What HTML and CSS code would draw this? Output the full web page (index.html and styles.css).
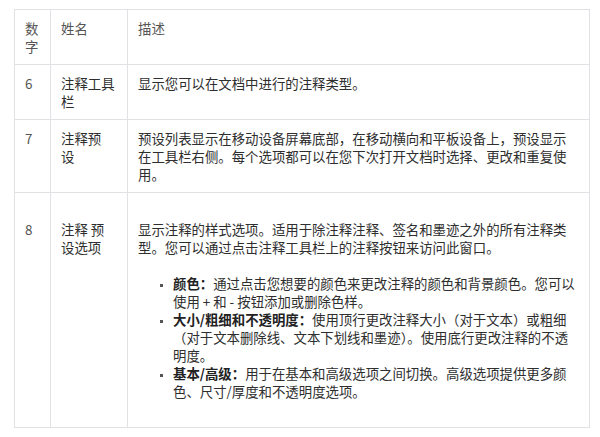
FILE: index.html
```html
<!DOCTYPE html>
<html lang="zh-CN">
<head>
<meta charset="utf-8">
<link rel="stylesheet" href="styles.css">
</head>
<body>
<table class="tbl">
  <colgroup>
    <col class="c-num">
    <col class="c-name">
    <col class="c-desc">
  </colgroup>
  <thead>
    <tr>
      <th>数字</th>
      <th>姓名</th>
      <th>描述</th>
    </tr>
  </thead>
  <tbody>
    <tr>
      <td>6</td>
      <td>注释工具栏</td>
      <td>显示您可以在文档中进行的注释类型。</td>
    </tr>
    <tr>
      <td>7</td>
      <td>注释预<br>设</td>
      <td>预设列表显示在移动设备屏幕底部，在移动横向和平板设备上，预设显示在工具栏右侧。每个选项都可以在您下次打开文档时选择、更改和重复使用。</td>
    </tr>
    <tr class="row-rich">
      <td>8</td>
      <td>注释 预设选项</td>
      <td>
        <p class="para">显示注释的样式选项。适用于除注释注释、签名和墨迹之外的所有注释类型。您可以通过点击注释工具栏上的注释按钮来访问此窗口。</p>
        <ul class="opts">
          <li><b>颜色：</b>通过点击您想要的颜色来更改注释的颜色和背景颜色。您可以使用 + 和 - 按钮添加或删除色样。</li>
          <li><b>大小/粗细和不透明度：</b>使用顶行更改注释大小（对于文本）或粗细（对于文本删除线、文本下划线和墨迹）。使用底行更改注释的不透明度。</li>
          <li><b>基本/高级：</b>用于在基本和高级选项之间切换。高级选项提供更多颜色、尺寸/厚度和不透明度选项。</li>
        </ul>
      </td>
    </tr>
  </tbody>
</table>
</body>
</html>
```
FILE: styles.css
```css
html, body {
  margin: 0;
  padding: 0;
  background: #ffffff;
}
body {
  font-family: "Noto Sans CJK SC", "Noto Sans", sans-serif;
  font-size: 13.4px;
  line-height: 18px;
  color: #2e2e2e;
}
.tbl {
  margin: 9px 0 0 14px;
  border-collapse: collapse;
  table-layout: fixed;
  width: 575px;
}
.c-num { width: 36px; }
.c-name { width: 77px; }
.c-desc { width: 462px; }
.tbl th,
.tbl td {
  border: 1px solid #e2e2e6;
  padding: 9px 10px;
  text-align: left;
  vertical-align: baseline;
}
.tbl th {
  font-weight: normal;
  color: #555555;
}
.tbl td {
  color: #2e2e2e;
}
.tbl td:first-child {
  color: #555555;
}
.para {
  margin: 18px 0;
}
.opts {
  margin: 18px 0;
  padding-left: 35px;
  list-style: none;
}
.opts li::before {
  content: "";
  display: inline-block;
  width: 3px;
  height: 3px;
  background: #555555;
  margin-left: -13px;
  margin-right: 10px;
  vertical-align: middle;
}
.opts b {
  font-weight: bold;
  color: #222222;
}
```
